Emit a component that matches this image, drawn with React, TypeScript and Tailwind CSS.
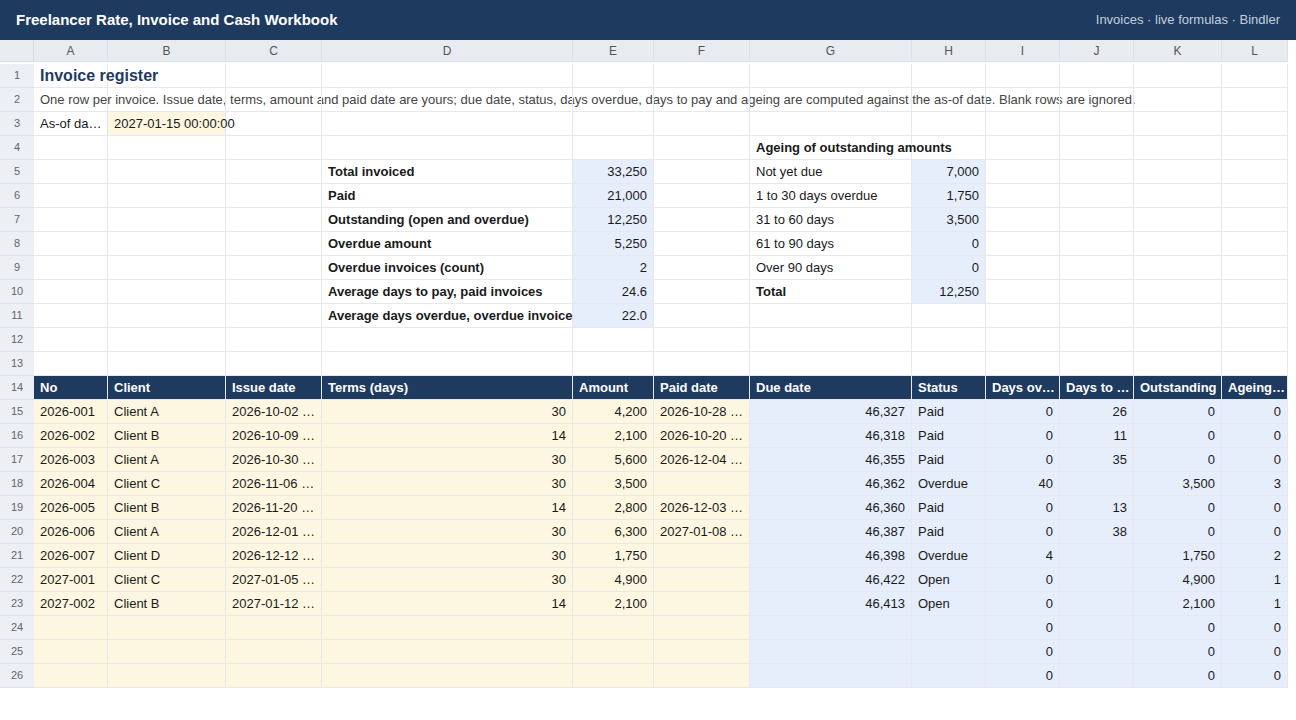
import React from "react";

const cols = ["A","B","C","D","E","F","G","H","I","J","K","L"];
type C = { t?: string; b?: boolean; r?: boolean; bg?: "y" | "b" | "h"; cls?: string };
const Y = "y", B = "b";

function row(cells: (C | null)[]): C[] {
  const out: C[] = [];
  for (let i = 0; i < 12; i++) out.push(cells[i] || {});
  return out;
}

const summary: [string, string][] = [
  ["Total invoiced","33,250"],["Paid","21,000"],["Outstanding (open and overdue)","12,250"],["Overdue amount","5,250"],["Overdue invoices (count)","2"],["Average days to pay, paid invoices","24.6"],["Average days overdue, overdue invoices","22.0"],
];
const ageing: [string, string, boolean][] = [
  ["Not yet due","7,000",false],["1 to 30 days overdue","1,750",false],["31 to 60 days","3,500",false],["61 to 90 days","0",false],["Over 90 days","0",false],["Total","12,250",true],
];
const inv = [
  ["2026-001","Client A","2026-10-02 …","30","4,200","2026-10-28 …","46,327","Paid","0","26","0","0"],
  ["2026-002","Client B","2026-10-09 …","14","2,100","2026-10-20 …","46,318","Paid","0","11","0","0"],
  ["2026-003","Client A","2026-10-30 …","30","5,600","2026-12-04 …","46,355","Paid","0","35","0","0"],
  ["2026-004","Client C","2026-11-06 …","30","3,500","","46,362","Overdue","40","","3,500","3"],
  ["2026-005","Client B","2026-11-20 …","14","2,800","2026-12-03 …","46,360","Paid","0","13","0","0"],
  ["2026-006","Client A","2026-12-01 …","30","6,300","2027-01-08 …","46,387","Paid","0","38","0","0"],
  ["2026-007","Client D","2026-12-12 …","30","1,750","","46,398","Overdue","4","","1,750","2"],
  ["2027-001","Client C","2027-01-05 …","30","4,900","","46,422","Open","0","","4,900","1"],
  ["2027-002","Client B","2027-01-12 …","14","2,100","","46,413","Open","0","","2,100","1"],
  ["","","","","","","","","0","","0","0"],
  ["","","","","","","","","0","","0","0"],
  ["","","","","","","","","0","","0","0"],
];
const rightAl = [false,false,false,true,true,false,true,false,true,true,true,true];

const rows: C[][] = [];
rows.push(row([{ t: "Invoice register", cls: "text-[16px] font-bold text-[#1e3a5f]" }]));
rows.push(row([{ t: "One row per invoice. Issue date, terms, amount and paid date are yours; due date, status, days overdue, days to pay and ageing are computed against the as-of date. Blank rows are ignored.", cls: "text-[#444]" }]));
rows.push(row([{ t: "As-of da…" }, { t: "2027-01-15 00:00:00", bg: Y }]));
rows.push(row([null,null,null,null,null,null,{ t: "Ageing of outstanding amounts", b: true }]));
for (let i = 0; i < 7; i++) {
  const a = ageing[i];
  rows.push(row([null,null,null,{ t: summary[i][0], b: true },{ t: summary[i][1], r: true, bg: B },null,
    a ? { t: a[0], b: a[2] } : null, a ? { t: a[1], r: true, bg: B } : null]));
}
rows.push(row([]));
rows.push(row([]));
const heads = ["No","Client","Issue date","Terms (days)","Amount","Paid date","Due date","Status","Days ov…","Days to …","Outstanding","Ageing…"];
rows.push(heads.map((h) => ({ t: h, b: true, bg: "h" as const })));
for (const r of inv) rows.push(r.map((t, i) => ({ t, r: rightAl[i], bg: i < 6 ? Y : B } as C)));

export default function App() {
  return (
    <div className="w-[1296px] h-[720px] bg-white overflow-hidden text-[13px] text-[#1a1a1a]" style={{ fontFamily: '"Liberation Sans", Arial, sans-serif' }}>
      <div className="h-[40px] bg-[#1f3a5f] flex items-center justify-between px-4">
        <span className="text-white font-bold text-[15px]">Freelancer Rate, Invoice and Cash Workbook</span>
        <span className="text-[#c4cfdd] text-[13px]">Invoices · live formulas · Bindler</span>
      </div>
      <div className="grid grid-cols-[34px_74px_118px_96px_251px_81px_96px_162px_74px_74px_74px_88px_66px] auto-rows-[24px] w-[1288px]">
        <div className="h-[22px] bg-[#e8ebf0] border-b border-r border-[#d8dce3]" />
        {cols.map((c) => (
          <div key={c} className="h-[22px] bg-[#e8ebf0] border-b border-r border-[#dde1e7] flex items-center justify-center text-[12px] text-[#555]">{c}</div>
        ))}
        {rows.map((r, ri) => (
          <React.Fragment key={ri}>
            <div className="bg-[#eceff3] border-b border-[#dde1e7] flex items-center justify-center text-[11px] text-[#666]">{ri + 1}</div>
            {r.map((c, ci) => {
              const bg = c.bg === "y" ? "bg-[#fdf6e0]" : c.bg === "b" ? "bg-[#e7eefb]" : c.bg === "h" ? "bg-[#1f3a5f] text-white border-[#5a6f8c]" : "";
              return (
                <div key={ci} className={`border-b border-r border-[#e6e8ee] flex items-center px-[6px] whitespace-nowrap ${c.r ? "justify-end" : ""} ${c.b ? "font-bold" : ""} ${bg} ${c.cls || ""}`}>
                  {c.t}
                </div>
              );
            })}
          </React.Fragment>
        ))}
      </div>
    </div>
  );
}
